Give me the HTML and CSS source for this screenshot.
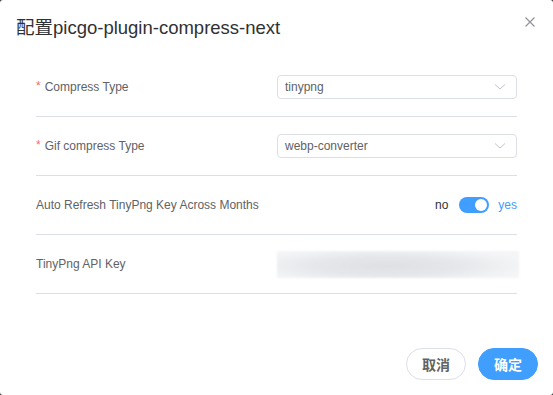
FILE: index.html
```html
<!DOCTYPE html>
<html>
<head>
<meta charset="utf-8">
<link rel="stylesheet" href="styles.css">
</head>
<body>
<div class="dialog">
  <div class="header">
    <span class="title">配置picgo-plugin-compress-next</span>
    <svg class="close" width="10" height="10" viewBox="0 0 10 10"><path d="M0.5 0.5L9.5 9.5M9.5 0.5L0.5 9.5" stroke="#909399" stroke-width="1.2" fill="none"/></svg>
  </div>
  <div class="form">
    <div class="row">
      <div class="label"><span class="req">*</span>Compress Type</div>
      <div class="select"><span>tinypng</span><svg width="12" height="8" viewBox="0 0 12 8"><path d="M1 1.5L6 6L11 1.5" stroke="#c0c4cc" stroke-width="1" fill="none"/></svg></div>
    </div>
    <div class="row">
      <div class="label"><span class="req">*</span>Gif compress Type</div>
      <div class="select"><span>webp-converter</span><svg width="12" height="8" viewBox="0 0 12 8"><path d="M1 1.5L6 6L11 1.5" stroke="#c0c4cc" stroke-width="1" fill="none"/></svg></div>
    </div>
    <div class="row">
      <div class="label plain">Auto Refresh TinyPng Key Across Months</div>
      <div class="switch-wrap">
        <span class="sw-no">no</span>
        <span class="switch"><span class="knob"></span></span>
        <span class="sw-yes">yes</span>
      </div>
    </div>
    <div class="row">
      <div class="label plain">TinyPng API Key</div>
      <div class="blur-input"></div>
    </div>
  </div>
  <div class="footer">
    <button class="btn cancel">取消</button>
    <button class="btn ok">确定</button>
  </div>
</div>
</body>
</html>
```

FILE: styles.css
```css
html, body {
  margin: 0;
  padding: 0;
  background: #3a3a3a;
}
body {
  font-family: "Liberation Sans", "Noto Sans CJK SC", sans-serif;
}
.dialog {
  width: 553px;
  height: 395px;
  background: #fff;
  border-radius: 3px;
  box-sizing: border-box;
  display: flex;
  flex-direction: column;
  position: relative;
}
.header {
  height: 57px;
  padding: 16px 0 0 16px;
  box-sizing: border-box;
  display: flex;
  align-items: flex-start;
}
.title {
  font-size: 18.5px;
  line-height: 24px;
  color: #303133;
}
.close {
  position: absolute;
  right: 18px;
  top: 17px;
}
.form {
  margin: 1px 36px 0 36px;
  display: flex;
  flex-direction: column;
}
.row {
  height: 59px;
  box-sizing: border-box;
  border-bottom: 1px solid #dcdfe6;
  display: flex;
  align-items: center;
  justify-content: space-between;
}
.label {
  font-size: 12px;
  color: #606266;
  display: flex;
  align-items: center;
}
.req {
  color: #f56c6c;
  margin-right: 4px;
  font-size: 12px;
  position: relative;
  top: -1px;
}
.select {
  width: 240px;
  height: 24px;
  box-sizing: border-box;
  border: 1px solid #dcdfe6;
  border-radius: 4px;
  display: flex;
  align-items: center;
  justify-content: space-between;
  padding: 0 10px 0 7px;
  font-size: 12px;
  color: #606266;
}
.switch-wrap {
  display: flex;
  align-items: center;
  font-size: 12px;
}
.sw-no {
  color: #303133;
  margin-right: 11px;
}
.sw-yes {
  color: #409eff;
  margin-left: 9px;
}
.switch {
  width: 30px;
  height: 16px;
  border-radius: 8px;
  background: #409eff;
  display: flex;
  align-items: center;
  justify-content: flex-end;
  padding: 0 2px;
  box-sizing: border-box;
}
.knob {
  width: 12px;
  height: 12px;
  border-radius: 50%;
  background: #fff;
}
.blur-input {
  width: 242px;
  height: 27px;
  margin-right: -2px;
  background: radial-gradient(ellipse 60% 70% at 45% 55%, #dfe0e3 0%, #e6e7ea 50%, #f1f2f4 85%, #f5f5f7 100%);
  filter: blur(1px);
}
.footer {
  margin-top: auto;
  display: flex;
  justify-content: flex-end;
  gap: 12px;
  padding: 0 15px 15px 0;
}
.btn {
  width: 60px;
  height: 32px;
  border-radius: 16px;
  font-family: "Liberation Sans", "Noto Sans CJK SC", sans-serif;
  font-size: 14px;
  font-weight: bold;
  cursor: pointer;
  padding: 0;
}
.cancel {
  background: #fff;
  border: 1px solid #dcdfe6;
  color: #606266;
}
.ok {
  background: #409eff;
  border: 1px solid #409eff;
  color: #fff;
}
```
